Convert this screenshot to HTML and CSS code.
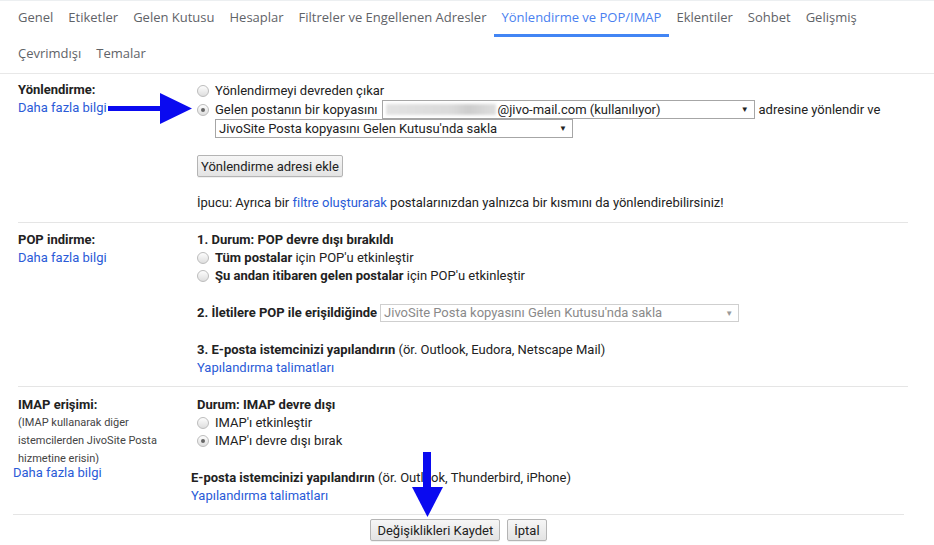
FILE: index.html
```html
<!DOCTYPE html>
<html lang="tr">
<head>
<meta charset="UTF-8">
<meta name="viewport" content="width=device-width, initial-scale=1.0">
<title>Ayarlar</title>
<link rel="stylesheet" href="styles.css">
</head>
<body>
<div class="tabs">
    <div class="tab-row">
        <span class="tab">Genel</span>
        <span class="tab">Etiketler</span>
        <span class="tab">Gelen Kutusu</span>
        <span class="tab">Hesaplar</span>
        <span class="tab">Filtreler ve Engellenen Adresler</span>
        <span class="tab active">Yönlendirme ve POP/IMAP</span>
        <span class="tab">Eklentiler</span>
        <span class="tab">Sohbet</span>
        <span class="tab">Gelişmiş</span>
    </div>
    <div class="tab-row">
        <span class="tab">Çevrimdışı</span>
        <span class="tab">Temalar</span>
    </div>
</div>

<div class="settings">
    <!-- Yönlendirme -->
    <div class="section fwd">
        <div class="label-col">
            <div class="label">Yönlendirme:</div>
            <a class="link">Daha fazla bilgi</a>
        </div>
        <div class="value-col">
            <div class="row">
                <span class="radio"></span>Yönlendirmeyi devreden çıkar
            </div>
            <div class="row">
                <span class="radio checked"></span>Gelen postanın bir kopyasını
                <span class="select wide">
                    <span class="blur"></span>@jivo-mail.com (kullanılıyor)
                    <span class="caret">▼</span>
                </span>
                adresine yönlendir ve
            </div>
            <div class="row indent">
                <span class="select keep">
                    JivoSite Posta kopyasını Gelen Kutusu'nda sakla
                    <span class="caret">▼</span>
                </span>
            </div>
            <button class="btn add-btn">Yönlendirme adresi ekle</button>
            <div class="tip">İpucu: Ayrıca bir <a class="link">filtre oluşturarak</a> postalarınızdan yalnızca bir kısmını da yönlendirebilirsiniz!</div>
        </div>
    </div>

    <!-- POP -->
    <div class="section pop">
        <div class="label-col">
            <div class="label">POP indirme:</div>
            <a class="link">Daha fazla bilgi</a>
        </div>
        <div class="value-col">
            <div class="line"><b>1. Durum: POP devre dışı bırakıldı</b></div>
            <div class="line"><span class="radio"></span><b>Tüm postalar</b>&nbsp;için POP'u etkinleştir</div>
            <div class="line"><span class="radio"></span><b>Şu andan itibaren gelen postalar</b>&nbsp;için POP'u etkinleştir</div>
            <div class="line gap">
                <b>2. İletilere POP ile erişildiğinde</b>
                <span class="select disabled">
                    JivoSite Posta kopyasını Gelen Kutusu'nda sakla
                    <span class="caret">▼</span>
                </span>
            </div>
            <div class="line gap"><b>3. E-posta istemcinizi yapılandırın</b>&nbsp;(ör. Outlook, Eudora, Netscape Mail)</div>
            <div class="line"><a class="link">Yapılandırma talimatları</a></div>
        </div>
    </div>

    <!-- IMAP -->
    <div class="section imap">
        <div class="label-col">
            <div class="label">IMAP erişimi:</div>
            <div class="note">(IMAP kullanarak diğer istemcilerden JivoSite Posta hizmetine erisin)</div>
            <a class="link shift">Daha fazla bilgi</a>
        </div>
        <div class="value-col">
            <div class="line"><b>Durum: IMAP devre dışı</b></div>
            <div class="line"><span class="radio"></span>IMAP'ı etkinleştir</div>
            <div class="line"><span class="radio checked"></span>IMAP'ı devre dışı bırak</div>
            <div class="line gap shift"><b>E-posta istemcinizi yapılandırın</b>&nbsp;(ör. Outlook, Thunderbird, iPhone)</div>
            <div class="line shift"><a class="link">Yapılandırma talimatları</a></div>
        </div>
    </div>

    <div class="actions">
        <button class="btn">Değişiklikleri Kaydet</button>
        <button class="btn">İptal</button>
    </div>
</div>

<!-- işaret okları -->
<svg class="arrow arrow-right" width="84" height="32" viewBox="0 0 84 32">
    <rect x="0" y="13" width="54" height="5" fill="#0a0af0"/>
    <polygon points="52,0 84,15.5 52,31" fill="#0a0af0"/>
</svg>
<svg class="arrow arrow-down" width="32" height="66" viewBox="0 0 32 66">
    <rect x="11" y="0" width="8" height="37" fill="#0a0af0"/>
    <polygon points="0,35 31,35 15.5,65" fill="#0a0af0"/>
</svg>
</body>
</html>
```

FILE: styles.css
```css
body {
    margin: 0;
    padding: 0;
    background-color: #fff;
    color: #222;
    font-family: Roboto, "Liberation Sans", Arial, sans-serif;
    font-size: 13px;
    position: relative;
    width: 934px;
    height: 545px;
    overflow: hidden;
}
.tabs {
    border-top: 1px solid #eceff1;
    border-bottom: 1px solid #e8e8e8;
    padding-left: 10.5px;
}
.tab-row {
    display: flex;
    height: 36px;
}
.tab {
    font-family: "Open Sans", sans-serif;
    font-size: 13px;
    color: #5f6368;
    padding: 0 7.5px;
    line-height: 33px;
    border-bottom: 3px solid transparent;
}
.tab.active {
    color: #4a7ff0;
    border-bottom-color: #4285f4;
}
.section {
    display: grid;
    grid-template-columns: 179px 1fr;
    margin: 0 26px 0 18px;
}
.fwd {
    padding: 7px 0 10px;
    border-bottom: 1px solid #e5e5e5;
}
.pop {
    padding: 8px 0 9px;
    border-bottom: 1px solid #e5e5e5;
}
.imap {
    padding: 9px 0 9px;
}
.label {
    font-weight: bold;
    line-height: 18px;
}
.link {
    color: #2a5bd7;
    line-height: 18px;
    display: inline-block;
    cursor: pointer;
}
.tip .link {
    display: inline;
}
.row {
    display: flex;
    align-items: center;
    height: 19px;
    line-height: 19px;
}
.row.indent {
    padding-left: 18px;
}
.line {
    display: flex;
    align-items: center;
    height: 18px;
    line-height: 18px;
}
.line.gap {
    margin-top: 19px;
}
.shift {
    margin-left: -6px;
}
.radio {
    width: 12px;
    height: 12px;
    box-sizing: border-box;
    border: 1px solid #bcbcbc;
    border-radius: 50%;
    background: linear-gradient(#fdfdfd, #dedede);
    margin-right: 6px;
    position: relative;
    flex-shrink: 0;
}
.radio.checked::after {
    content: "";
    position: absolute;
    left: 3px;
    top: 3px;
    width: 4px;
    height: 4px;
    border-radius: 50%;
    background-color: #666;
}
.select {
    display: flex;
    align-items: center;
    box-sizing: border-box;
    height: 19px;
    border: 1px solid #a6a6a6;
    background-color: #fff;
    padding-left: 3px;
    position: relative;
    color: #222;
}
.select.wide {
    width: 373px;
    margin: 0 4px;
}
.select.keep {
    width: 358px;
}
.select.disabled {
    width: 359px;
    height: 18px;
    margin-left: 3px;
    border-color: #cfcfcf;
    color: #8a8a8a;
    font-weight: normal;
}
.caret {
    position: absolute;
    right: 5px;
    top: 0;
    font-size: 8px;
    line-height: 17px;
}
.disabled .caret {
    color: #999;
}
.blur {
    display: inline-block;
    width: 110px;
    height: 11px;
    margin-right: 2px;
    background: linear-gradient(90deg, #e2e2e2, #dadada 60%, #cdcdcd 75%, #dedede);
    filter: blur(1.5px);
}
.btn {
    font-family: Roboto, "Liberation Sans", Arial, sans-serif;
    font-size: 13px;
    color: #222;
    height: 22px;
    padding: 0 6px;
    border: 1px solid #b4b4b4;
    border-radius: 2px;
    background: linear-gradient(#f6f6f6, #e3e3e3);
    box-shadow: 0 1px 0 rgba(0, 0, 0, 0.06);
    white-space: nowrap;
    cursor: pointer;
}
.add-btn {
    display: block;
    margin-top: 17px;
    padding: 0 3px;
}
.tip {
    margin-top: 17px;
    line-height: 18px;
}
.note {
    font-size: 11px;
    line-height: 18px;
    color: #444;
    height: 50px;
    overflow: hidden;
    width: 160px;
}
.link.shift {
    margin-left: -5px;
}
.actions {
    margin: 0 30px 0 13px;
    border-top: 1px solid #e5e5e5;
    padding-top: 4px;
    display: flex;
    justify-content: center;
    gap: 7px;
}
.arrow {
    position: absolute;
}
.arrow-right {
    left: 108px;
    top: 93px;
}
.arrow-down {
    left: 412px;
    top: 452px;
}
```
